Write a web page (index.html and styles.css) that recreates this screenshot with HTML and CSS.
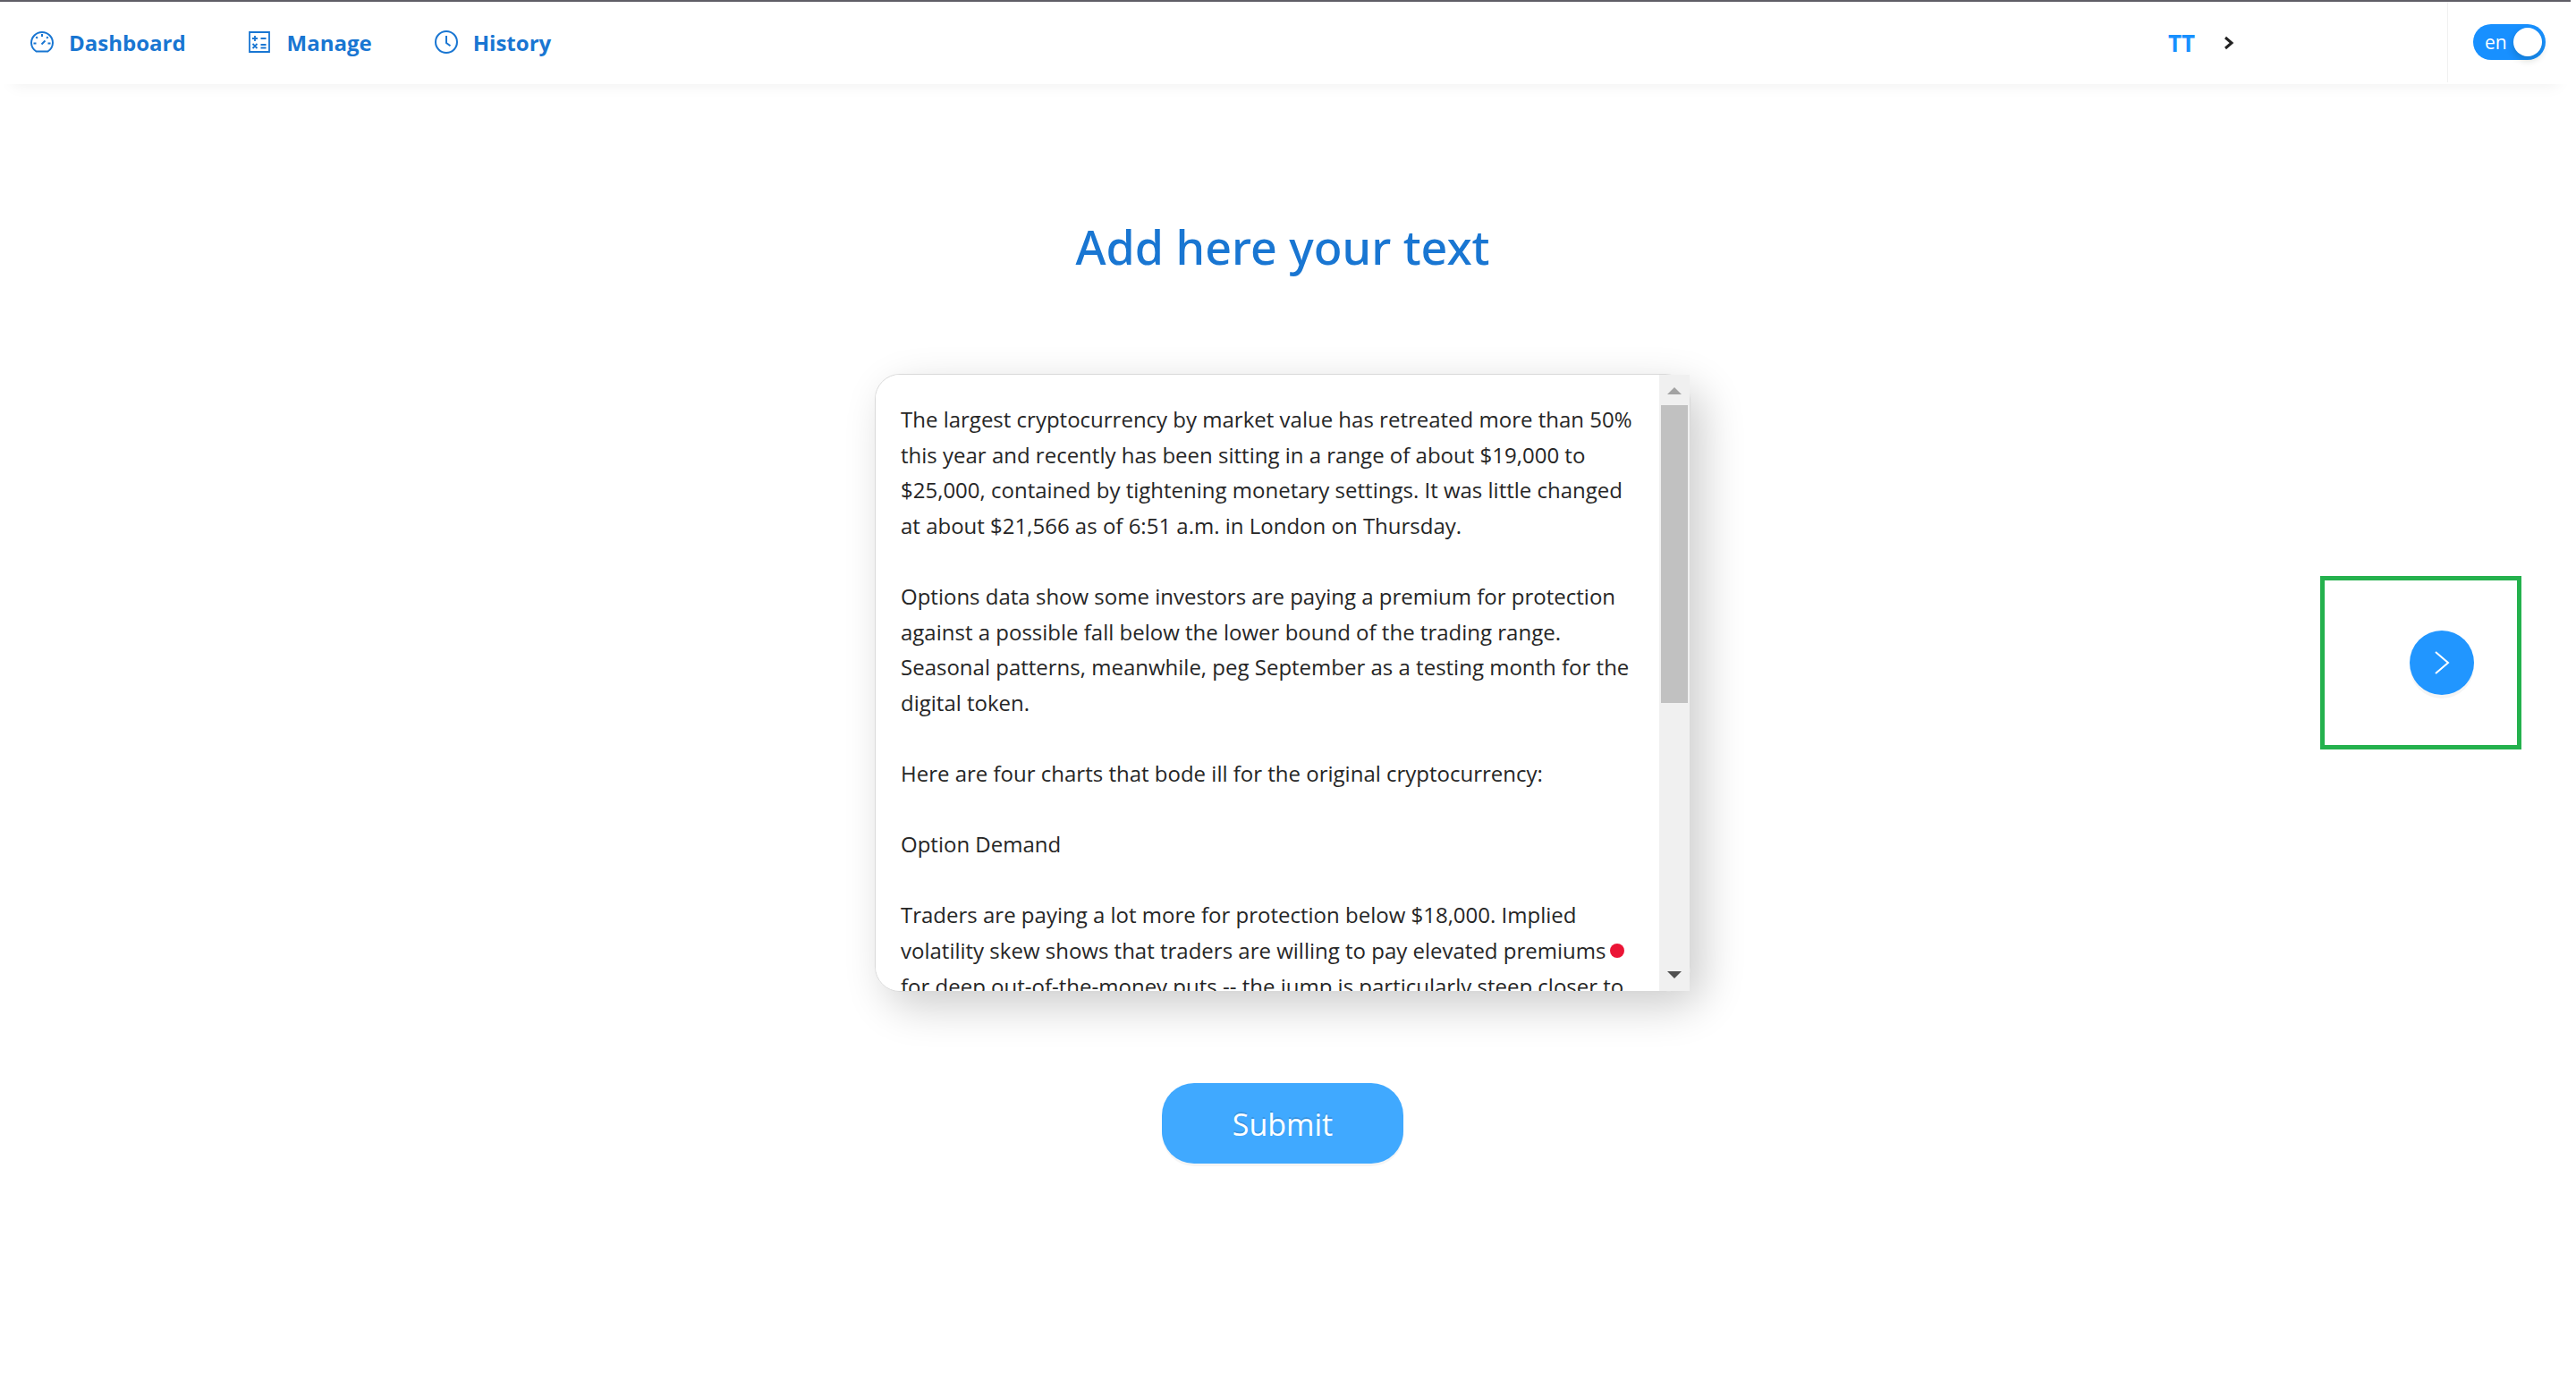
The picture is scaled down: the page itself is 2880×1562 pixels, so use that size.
FILE: index.html
```html
<!DOCTYPE html>
<html lang="en">
<head>
<meta charset="utf-8">
<title>Add text</title>
<link rel="stylesheet" href="styles.css">
</head>
<body>
<header class="topbar">
  <nav class="menu" aria-label="Main">
    <a class="menu-link" href="#dashboard">
      <svg class="icon" viewBox="0 0 26 26" aria-hidden="true"><path d="M6.500 23.500A12 12 0 0 1 1 14a12 12 0 0 1 24 0 12 12 0 0 1-5.500 9.500Z"/><path d="M13 4v3M6.300 7.200l1.600 1.600M19.700 7.200l-1.600 1.600M3.500 14.500h3M19.500 14.500h3M12.500 15.500l4-4"/></svg>
      Dashboard
    </a>
    <a class="menu-link" href="#manage">
      <svg class="icon icon-fine" viewBox="0 0 26 26" aria-hidden="true"><path d="M1 2h22v22H1z"/><path d="M7 6v6M4 9h6M13.500 9h6M4.500 15l5 5M9.500 15l-5 5M13.500 16h6M13.500 19.500h6"/></svg>
      Manage
    </a>
    <a class="menu-link" href="#history">
      <svg class="icon" viewBox="0 0 26 26" aria-hidden="true"><circle cx="13" cy="13" r="12"/><path d="M13 6v8l4.500 3.300"/></svg>
      History
    </a>
  </nav>
  <button class="account" type="button">TT
    <svg class="caret" viewBox="0 0 12 16" aria-hidden="true"><path d="M2 2l7 6-7 6"/></svg>
  </button>
  <div class="locale">
    <label class="switch">
      <input class="switch-input" type="checkbox" role="switch" aria-label="Language" checked>
      <span class="switch-text">en</span>
    </label>
  </div>
</header>
<main class="page">
  <h1 class="title"><label for="source">Add here your text</label></h1>
  <div class="editor">
    <textarea class="editor-input" id="source" spellcheck="false">The largest cryptocurrency by market value has retreated more than 50%
this year and recently has been sitting in a range of about $19,000 to
$25,000, contained by tightening monetary settings. It was little changed
at about $21,566 as of 6:51 a.m. in London on Thursday.

Options data show some investors are paying a premium for protection
against a possible fall below the lower bound of the trading range.
Seasonal patterns, meanwhile, peg September as a testing month for the
digital token.

Here are four charts that bode ill for the original cryptocurrency:

Option Demand

Traders are paying a lot more for protection below $18,000. Implied
volatility skew shows that traders are willing to pay elevated premiums
for deep out-of-the-money puts -- the jump is particularly steep closer to
</textarea>
    <div class="scrollbar" aria-hidden="true">
      <svg class="scroll-arrow scroll-arrow-up" viewBox="0 0 34 34"><path d="M9 22l8-8 8 8z"/></svg>
      <span class="scroll-thumb"></span>
      <svg class="scroll-arrow" viewBox="0 0 34 34"><path d="M9 12h16l-8 8z"/></svg>
    </div>
    <span class="editor-status"></span>
  </div>
  <button class="submit" type="button">Submit</button>
</main>
<aside class="side-panel">
  <button class="next" type="button" aria-label="Next">
    <svg class="next-icon" viewBox="0 0 18 26" aria-hidden="true"><path d="M2 1l14 12L2 25"/></svg>
  </button>
</aside>
</body>
</html>
```
FILE: styles.css
```css
* { box-sizing: border-box; }

body {
  margin: 0;
  min-height: 100vh;
  position: relative;
  background: #fff;
  color: #262626;
  font-family: "Open Sans", "Noto Sans", sans-serif;
}

button, textarea { font: inherit; }

.topbar {
  display: flex;
  align-items: flex-start;
  height: 94px;
  margin-right: 6px;
  border-top: 2px solid #5f5e66;
  box-shadow: 0 16px 16px -14px rgba(0, 0, 0, 0.06);
}

.menu {
  display: flex;
  flex: 1;
  align-items: center;
  gap: 70px;
  height: 90px;
  padding-left: 34px;
}

.menu-link {
  display: flex;
  align-items: center;
  gap: 17px;
  color: #1976d2;
  font-size: 24px;
  font-weight: 700;
  text-decoration: none;
}

.icon {
  width: 26px;
  height: 26px;
  fill: none;
  stroke: currentColor;
  stroke-width: 2;
}

.icon-fine { stroke-width: 1.8; }

.account {
  display: flex;
  align-items: center;
  gap: 32px;
  width: 312px;
  height: 92px;
  padding: 0;
  border: 0;
  background: none;
  color: #1890ff;
  font-size: 26px;
  font-weight: 700;
}

.caret {
  width: 12px;
  height: 16px;
  fill: none;
  stroke: #222;
  stroke-width: 3;
}

.locale {
  display: flex;
  align-items: center;
  width: 138px;
  height: 90px;
  padding-left: 28px;
  border-left: 1px solid #f0f0f0;
}

.switch {
  position: relative;
  width: 81px;
  height: 40px;
}

.switch-input {
  appearance: none;
  display: block;
  width: 100%;
  height: 100%;
  margin: 0;
  border-radius: 20px;
  background: #1890ff;
}

.switch-input::after {
  content: "";
  position: absolute;
  top: 4px;
  right: 4px;
  width: 32px;
  height: 32px;
  border-radius: 50%;
  background: #fff;
  box-shadow: 0 4px 8px rgba(0, 35, 11, 0.2);
}

.switch-text {
  position: absolute;
  top: 4px;
  left: 13px;
  color: #fff;
  font-size: 21px;
  line-height: 32px;
}

.page {
  display: flex;
  flex-direction: column;
  align-items: center;
  padding: 142px 12px 0 0;
}

.title {
  margin: 0;
  color: #1976d2;
  font-family: "Noto Sans", sans-serif;
  font-size: 52px;
  font-weight: 500;
  line-height: 80px;
}

.editor {
  position: relative;
  display: flex;
  width: 912px;
  height: 691px;
  margin-top: 102px;
  border: 1px solid #d9d9d9;
  border-radius: 28px;
  box-shadow: 14px 16px 48px rgba(0, 0, 0, 0.2);
}

.editor-input {
  flex: 1;
  min-width: 0;
  padding: 30px 0 0 28px;
  border: 0;
  border-radius: 28px 0 0 28px;
  outline: 0;
  background: #fff;
  color: #262626;
  font-size: 24px;
  line-height: 1.65;
  resize: none;
  white-space: pre;
  overflow: hidden;
}

.scrollbar {
  display: flex;
  flex-direction: column;
  justify-content: space-between;
  width: 34px;
  background: #f0f0f0;
}

.scroll-arrow {
  width: 34px;
  height: 34px;
  fill: #505050;
}

.scroll-arrow-up { fill: #a3a3a3; }

.scroll-thumb {
  height: 333px;
  margin: 0 2px auto;
  background: #c1c1c1;
}

.editor-status {
  position: absolute;
  right: 73px;
  bottom: 37px;
  width: 16px;
  height: 16px;
  border-radius: 50%;
  background: #eb1435;
}

.submit {
  width: 270px;
  height: 90px;
  margin-top: 102px;
  padding: 2px 0 0;
  border: 0;
  border-radius: 36px;
  background: #40a9ff;
  box-shadow: 0 3px 0 rgba(0, 0, 0, 0.04);
  color: #fff;
  font-size: 34px;
  text-shadow: 0 -2px 0 rgba(0, 0, 0, 0.12);
}

.side-panel {
  position: absolute;
  top: 644px;
  right: 61px;
  display: flex;
  align-items: center;
  justify-content: flex-end;
  width: 225px;
  height: 194px;
  padding-right: 48px;
  border: 5px solid #24b14d;
}

.next {
  display: grid;
  place-items: center;
  width: 72px;
  height: 72px;
  padding: 0;
  border: 0;
  border-radius: 50%;
  background: #2196ff;
  box-shadow: 0 4px 0 rgba(0, 0, 0, 0.04);
}

.next-icon {
  width: 18px;
  height: 26px;
  fill: none;
  stroke: #fff;
  stroke-width: 2;
}
```
